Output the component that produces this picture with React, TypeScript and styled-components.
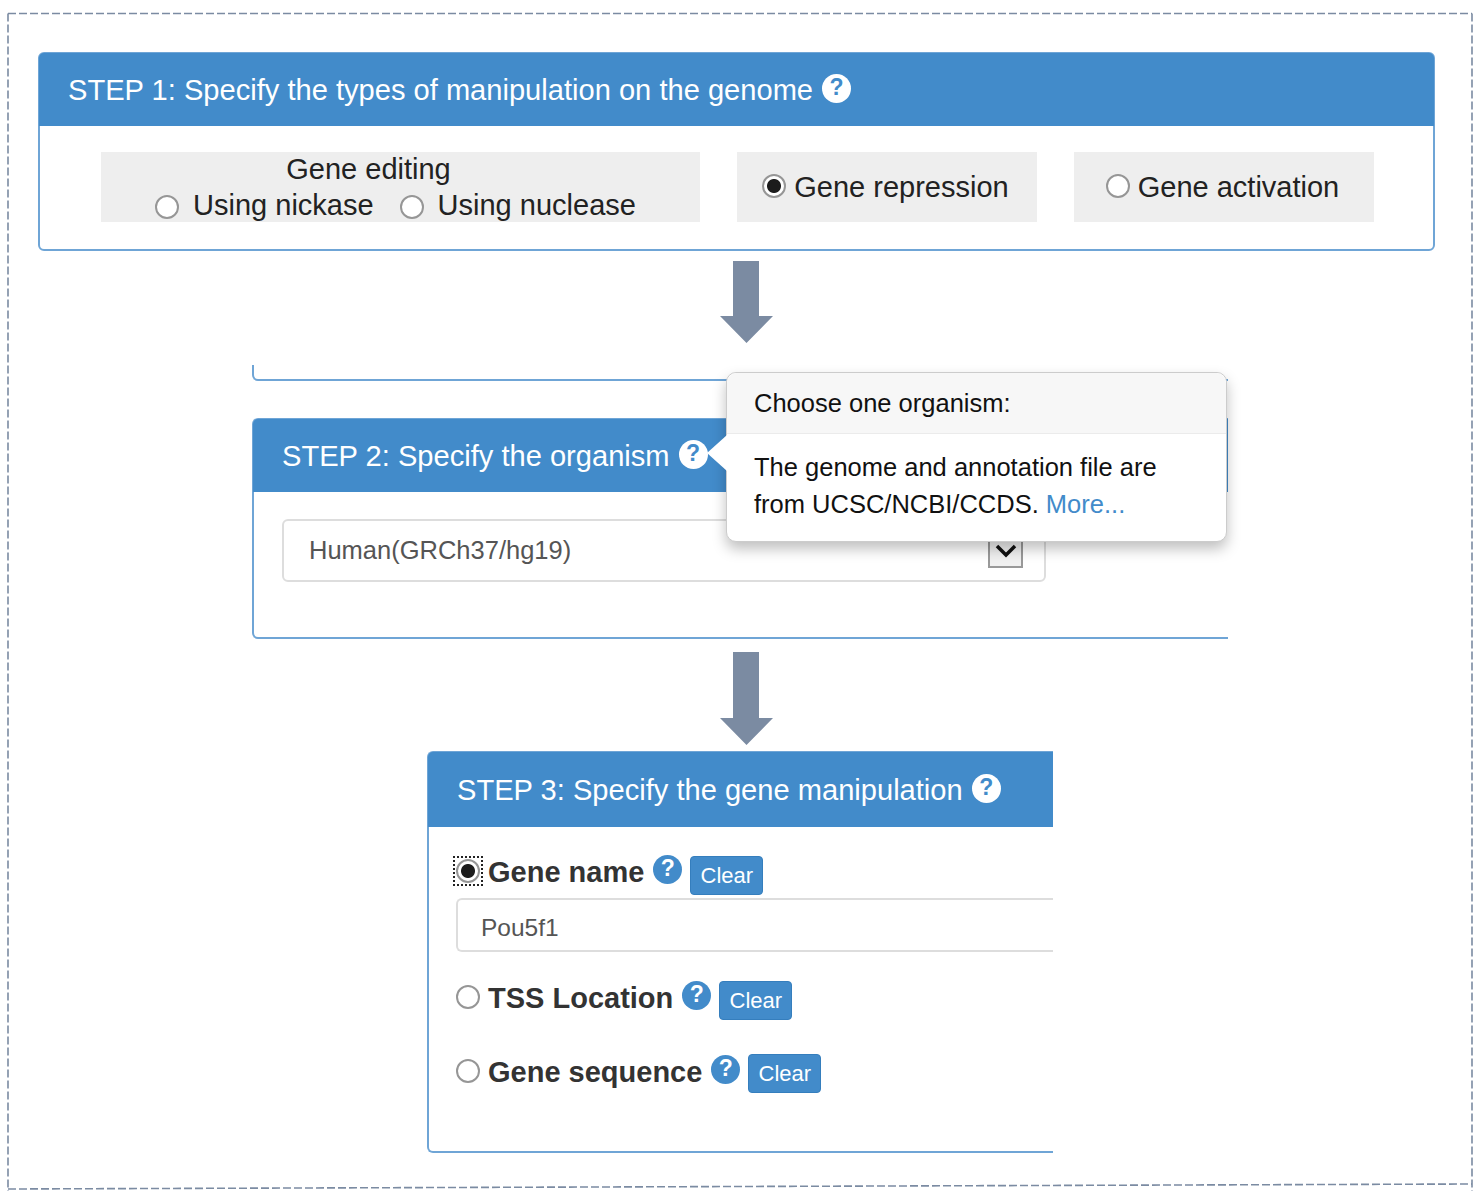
import React from 'react';
import styled, { createGlobalStyle } from 'styled-components';

const BLUE = '#428bca';
const SLATE = '#7b8ba2';

const GlobalStyle = createGlobalStyle`
  html, body {
    margin: 0;
    background: #fff;
    font-family: "Liberation Sans", Arial, sans-serif;
  }
`;

const Page = styled.div`
  position: relative;
  box-sizing: border-box;
  width: 1479px;
  height: 1191px;
  padding: 52px 0 0 38px;
  overflow: hidden;
`;

// the hand-drawn dashed frame round the figure, its bottom edge is slightly tilted
const DashedFrame = styled.svg`
  position: absolute;
  top: 0;
  left: 0;
  pointer-events: none;
`;

const Panel = styled.section<{ $width: number; $open?: boolean; $height: number }>`
  box-sizing: border-box;
  width: ${(p) => p.$width}px;
  height: ${(p) => p.$height}px;
  border: 2px solid #6fa5d6;
  border-right-width: ${(p) => (p.$open ? 0 : 2)}px;
  border-radius: ${(p) => (p.$open ? '6px 0 0 6px' : '6px')};
  background: #fff;
`;

const Heading = styled.h2<{ $height: number; $open?: boolean }>`
  box-sizing: border-box;
  display: flex;
  align-items: center;
  gap: 9px;
  height: ${(p) => p.$height}px;
  margin: -1px ${(p) => (p.$open ? 0 : -1)}px 0 -1px;
  padding: 1px 0 0 29px;
  background: ${BLUE};
  border-radius: ${(p) => (p.$open ? '5px 0 0 0' : '5px 5px 0 0')};
  color: #fff;
  font-size: 29.1px;
  font-weight: 400;
  white-space: nowrap;
`;

const HelpDot = styled.span<{ $light?: boolean }>`
  display: inline-flex;
  align-items: center;
  justify-content: center;
  flex: none;
  box-sizing: border-box;
  width: 29px;
  height: 29px;
  margin-bottom: ${(p) => (p.$light ? 3 : 0)}px;
  padding-bottom: 2px;
  border-radius: 50%;
  background: ${(p) => (p.$light ? '#fff' : BLUE)};
  color: ${(p) => (p.$light ? BLUE : '#fff')};
  font-size: 23px;
  font-weight: 700;
`;

const OptionRow = styled.div`
  display: flex;
  gap: 37px;
  padding: 26px 0 0 61px;
`;

const Option = styled.div<{ $width: number }>`
  box-sizing: border-box;
  display: flex;
  align-items: center;
  justify-content: center;
  gap: 8px;
  width: ${(p) => p.$width}px;
  height: 70px;
  padding-right: 3px;
  background: #eee;
  color: #222;
  font-size: 29px;
`;

const EditingOption = styled(Option)`
  flex-direction: column;
  gap: 0;
  padding-right: 0;
  line-height: 35px;
`;

const EditingTitle = styled.div`
  margin-right: 64px;
`;

const NestedChoices = styled.div`
  display: flex;
  align-items: center;
  gap: 26px;
  margin: 1px 10px 0 0;
`;

const Choice = styled.span`
  display: flex;
  align-items: center;
  gap: 14px;
`;

const Radio = styled.input.attrs({ type: 'radio', readOnly: true })<{ $shift?: number }>`
  appearance: none;
  flex: none;
  box-sizing: border-box;
  width: 24px;
  height: 24px;
  margin: ${(p) => p.$shift ?? 0}px 0 0;
  border: 2px solid #969696;
  border-radius: 50%;
  background: #fff;

  &:checked {
    background: radial-gradient(circle, #1c1c1c 0 6.5px, #fff 7.5px);
  }
`;

const ArrowRow = styled.div<{ $height: number; $top: number }>`
  display: flex;
  height: ${(p) => p.$height}px;
  margin: ${(p) => p.$top}px 0 0 682px;
`;

const Fragment = styled.div`
  box-sizing: border-box;
  width: 976px;
  height: 16px;
  margin: 22px 0 37px;
  border: 2px solid #6fa5d6;
  border-width: 0 0 2px 2px;
  border-bottom-left-radius: 6px;
`;

const OrganismBlock = styled.div`
  position: relative;
  margin-left: 214px;
`;

const SelectBox = styled.div`
  box-sizing: border-box;
  display: flex;
  align-items: center;
  justify-content: space-between;
  width: 764px;
  height: 63px;
  margin: 27px 0 0 28px;
  padding: 0 21px 0 25px;
  border: 2px solid #ddd;
  border-radius: 6px;
  color: #555;
  font-size: 25.5px;
`;

const SelectButton = styled.span`
  box-sizing: border-box;
  display: flex;
  align-items: center;
  justify-content: center;
  width: 35px;
  height: 34px;
  border: 2px solid #999;
  background: #f0f0f0;
`;

const Popover = styled.aside`
  position: absolute;
  z-index: 2;
  top: 7px;
  left: 474px;
  box-sizing: border-box;
  width: 501px;
  height: 170px;
  background: #fff;
  border: 1px solid #ccc;
  border-radius: 10px;
  box-shadow: 0 7px 14px rgba(0, 0, 0, 0.25);
  color: #111;
  font-size: 25.5px;

  &::before {
    content: '';
    position: absolute;
    left: -20px;
    top: 62px;
    border-style: solid;
    border-width: 18px 20px 18px 0;
    border-color: transparent #fff transparent transparent;
  }
`;

const PopoverTitle = styled.div`
  box-sizing: border-box;
  height: 61px;
  padding: 16px 0 0 27px;
  background: #f7f7f7;
  border-bottom: 1px solid #ebebeb;
  border-radius: 10px 10px 0 0;
`;

const PopoverBody = styled.div`
  padding: 15px 20px 0 27px;
  line-height: 37px;
`;

const MoreLink = styled.a`
  color: ${BLUE};
`;

const GeneBlock = styled.div`
  margin: 6px 0 0 389px;
`;

const GeneBody = styled.div`
  padding: 28px 0 0 27px;
`;

const GeneRow = styled.div<{ $top: number }>`
  display: flex;
  align-items: flex-start;
  margin-top: ${(p) => p.$top}px;
`;

const RadioCell = styled.span`
  display: flex;
  width: 32px;
  padding-top: 4px;
`;

const FocusBox = styled.span`
  display: flex;
  outline: 2px dotted #222;
  outline-offset: 1px;
`;

const GeneLabel = styled.label`
  margin-right: 9px;
  color: #333;
  font-size: 29px;
  font-weight: 700;
  line-height: 34px;
`;

const ClearButton = styled.button<{ $top: number }>`
  box-sizing: border-box;
  width: 73px;
  height: 39px;
  margin: ${(p) => p.$top}px 0 0 8px;
  padding: 0;
  border: 1px solid #357ebd;
  border-radius: 4px;
  background: ${BLUE};
  color: #fff;
  font-family: inherit;
  font-size: 22px;
`;

const GeneInput = styled.div`
  box-sizing: border-box;
  width: 597px;
  height: 54px;
  margin-top: 3px;
  padding: 14px 0 0 23px;
  border: 2px solid #ddd;
  border-right: 0;
  border-radius: 6px 0 0 6px;
  color: #555;
  font-size: 24.5px;
`;

const DownArrow = ({ shaft, total }: { shaft: number; total: number }) => (
  <svg width="54" height={total} viewBox={`0 0 54 ${total}`}>
    <path d={`M13 0H39V${shaft}H53L26.5 ${total}L0 ${shaft}H13Z`} fill={SLATE} />
  </svg>
);

const GeneRows = [
  { name: 'TSS Location', top: 29, buttonTop: 0 },
  { name: 'Gene sequence', top: 35, buttonTop: -1 },
];

export default function App() {
  return (
    <>
      <GlobalStyle />
      <Page>
        <DashedFrame width="1479" height="1191" viewBox="0 0 1479 1191">
          <path
            d="M8 13.5H1472M8 1189L1472 1184M8 13.5V1191M1472 13.5V1191"
            fill="none"
            stroke={SLATE}
            strokeWidth="1.6"
            strokeDasharray="8 3"
          />
        </DashedFrame>

        <Panel $width={1397} $height={199}>
          <Heading $height={73}>
            STEP 1: Specify the types of manipulation on the genome
            <HelpDot $light>?</HelpDot>
          </Heading>
          <OptionRow>
            <EditingOption $width={599}>
              <EditingTitle>Gene editing</EditingTitle>
              <NestedChoices>
                <Choice>
                  <Radio name="edit" $shift={4} />
                  Using nickase
                </Choice>
                <Choice>
                  <Radio name="edit" $shift={4} />
                  Using nuclease
                </Choice>
              </NestedChoices>
            </EditingOption>
            <Option $width={300}>
              <Radio name="kind" defaultChecked $shift={-3} />
              Gene repression
            </Option>
            <Option $width={300}>
              <Radio name="kind" $shift={-3} />
              Gene activation
            </Option>
          </OptionRow>
        </Panel>

        <ArrowRow $top={10} $height={82}>
          <DownArrow shaft={55} total={82} />
        </ArrowRow>

        <OrganismBlock>
          <Popover>
            <PopoverTitle>Choose one organism:</PopoverTitle>
            <PopoverBody>
              The genome and annotation file are from UCSC/NCBI/CCDS. <MoreLink>More...</MoreLink>
            </PopoverBody>
          </Popover>
          <Fragment />
          <Panel $width={976} $height={221} $open>
            <Heading $height={73} $open>
              STEP 2: Specify the organism
              <HelpDot $light>?</HelpDot>
            </Heading>
            <SelectBox>
              Human(GRCh37/hg19)
              <SelectButton>
                <svg width="22" height="14" viewBox="0 0 22 14">
                  <path d="M2 2L11 11L20 2" fill="none" stroke="#111" strokeWidth="3.5" />
                </svg>
              </SelectButton>
            </SelectBox>
          </Panel>
        </OrganismBlock>

        <ArrowRow $top={13} $height={93}>
          <DownArrow shaft={66} total={93} />
        </ArrowRow>

        <GeneBlock>
          <Panel $width={626} $height={402} $open>
            <Heading $height={75} $open>
              STEP 3: Specify the gene manipulation
              <HelpDot $light>?</HelpDot>
            </Heading>
            <GeneBody>
              <GeneRow $top={0}>
                <RadioCell>
                  <FocusBox>
                    <Radio name="gene" defaultChecked />
                  </FocusBox>
                </RadioCell>
                <GeneLabel>Gene name</GeneLabel>
                <HelpDot>?</HelpDot>
                <ClearButton $top={1}>Clear</ClearButton>
              </GeneRow>
              <GeneInput>Pou5f1</GeneInput>
              {GeneRows.map((row) => (
                <GeneRow key={row.name} $top={row.top}>
                  <RadioCell>
                    <Radio name="gene" />
                  </RadioCell>
                  <GeneLabel>{row.name}</GeneLabel>
                  <HelpDot>?</HelpDot>
                  <ClearButton $top={row.buttonTop}>Clear</ClearButton>
                </GeneRow>
              ))}
            </GeneBody>
          </Panel>
        </GeneBlock>
      </Page>
    </>
  );
}
